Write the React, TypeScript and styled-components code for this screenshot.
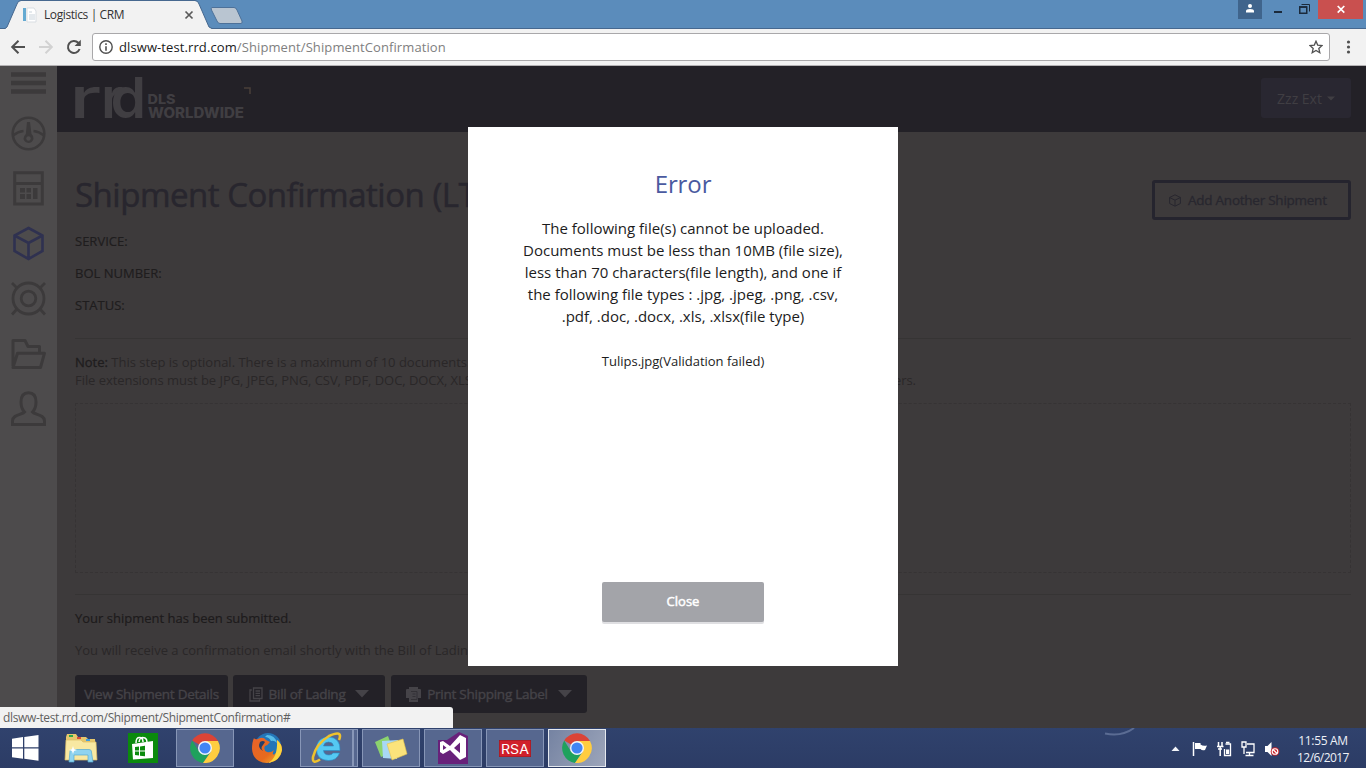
import React from "react";
import styled, { createGlobalStyle } from "styled-components";

const GlobalStyle = createGlobalStyle`
  * { box-sizing: border-box; }
  html, body { margin: 0; padding: 0; overflow: hidden; }
  svg { display: block; flex: none; }
`;

const ui = `"Open Sans", "Noto Sans", sans-serif`;

const Desktop = styled.div`
  position: relative;
  width: 1366px;
  height: 768px;
  display: flex;
  flex-direction: column;
  overflow: hidden;
  font-family: ${ui};
  background: #3d3a3b;
`;

/* ---------- browser chrome ---------- */

const TabStrip = styled.div`
  height: 29px;
  flex: none;
  display: flex;
  align-items: flex-start;
  background: #5b8cbb;
  border-bottom: 1px solid #46688f;
`;

const Tab = styled.div`
  position: relative;
  width: 214px;
  height: 29px;
  display: flex;
  align-items: center;
  padding: 1px 0 0 22px;
`;

const TabShape = styled.svg`
  position: absolute;
  left: 0;
  top: 0;
`;

const NewTab = styled.svg`
  margin-left: -7px;
`;

const TabContent = styled.div`
  position: relative;
  display: flex;
  align-items: center;
  width: 172px;
`;

const TabTitle = styled.span`
  flex: 1;
  margin: -1px 0 0 6px;
  font-size: 12px;
  letter-spacing: -0.4px;
  color: #333;
  white-space: nowrap;
`;

const WindowControls = styled.div`
  margin-left: auto;
  display: flex;
  padding-right: 3px;
`;

const WindowButton = styled.div<{ $width: number; $bg?: string }>`
  width: ${(p) => p.$width}px;
  height: 19px;
  background: ${(p) => p.$bg ?? "transparent"};
  display: flex;
  justify-content: center;
`;

const Toolbar = styled.div`
  height: 37px;
  flex: none;
  display: flex;
  align-items: center;
  padding: 0 0 1px 10px;
  background: #f2f2f2;
  border-bottom: 1px solid #b4b2b4;
`;

const NavIcons = styled.div`
  display: flex;
  flex: none;
  width: 82px;
  gap: 12px;
`;

const AddressBar = styled.div`
  width: 1238px;
  flex: none;
  height: 28px;
  display: flex;
  align-items: center;
  padding: 0 6px;
  border: 1px solid #a9a8aa;
  border-radius: 3px;
  background: #fff;
`;

const Url = styled.div`
  flex: 1;
  margin-left: 6px;
  font-size: 13px;
  letter-spacing: 0.1px;
  color: #808080;
  b { font-weight: 400; color: #1a1a1a; }
`;

const MenuDots = styled.svg`
  margin-left: 11px;
`;

/* ---------- page ---------- */

const Page = styled.div`
  height: 662px;
  flex: none;
  display: flex;
  background: #3d3a3b;
`;

const Sidebar = styled.nav`
  width: 57px;
  background: #4d4b4c;
  padding: 6px 0 0 11px;
  display: flex;
  flex-direction: column;
`;

const SideIcon = styled.svg<{ $gap: number }>`
  margin-bottom: ${(p) => p.$gap}px;
`;

const Body = styled.div`
  flex: 1;
  display: flex;
  flex-direction: column;
`;

const Header = styled.header`
  height: 66px;
  flex: none;
  display: flex;
  justify-content: space-between;
  align-items: flex-start;
  background: #232127;
  padding: 8px 15px 0 11px;
`;

const Logo = styled.svg`
  overflow: visible;
  font-family: Inter, sans-serif;
  fill: #403e42;
`;

const UserButton = styled.div`
  margin-top: 4px;
  width: 90px;
  height: 40px;
  border-radius: 3px;
  background: #292731;
  display: flex;
  align-items: center;
  justify-content: center;
  gap: 5px;
  font-size: 14px;
  color: #403e43;
`;

const Content = styled.main`
  padding: 0 15px 0 18px;
`;

const TitleRow = styled.div`
  margin-top: 48px;
  height: 40px;
  display: flex;
  align-items: center;
  justify-content: space-between;
`;

const Title = styled.h1`
  margin: -12px 0 0;
  font-size: 33px;
  font-weight: 400;
  letter-spacing: -0.48px;
  color: #28262e;
  -webkit-text-stroke: 0.5px #28262e;
  white-space: nowrap;
`;

const AddButton = styled.div`
  width: 199px;
  height: 40px;
  border: 3px solid #25242e;
  border-radius: 3px;
  display: flex;
  align-items: center;
  padding-left: 14px;
  gap: 7px;
  font-size: 13.5px;
  letter-spacing: -0.25px;
  color: #28272f;
  -webkit-text-stroke: 0.3px #28272f;
  white-space: nowrap;
`;

const Fields = styled.div`
  margin-top: 5px;
`;

const Field = styled.div`
  height: 32px;
  line-height: 32px;
  font-size: 13px;
  color: #1f1d1e;
  -webkit-text-stroke: 0.2px #1f1d1e;
`;

const Divider = styled.div<{ $top: number }>`
  margin-top: ${(p) => p.$top}px;
  height: 1px;
  background: #363434;
`;

const Note = styled.div`
  margin-top: 14px;
  height: 36px;
  line-height: 18px;
  font-size: 13px;
  color: #2a2728;
  white-space: nowrap;
  b { font-weight: 400; color: #1f1d1e; -webkit-text-stroke: 0.3px #1f1d1e; }
`;

const NoteLine = styled.div`
  display: flex;
  justify-content: space-between;
  width: 841px;
  letter-spacing: -0.05px;
`;

const DropZone = styled.div`
  margin-top: 14px;
  height: 170px;
  border: 1px dashed #363334;
`;

const Message = styled.p<{ $strong?: boolean }>`
  margin: 0;
  height: 32px;
  line-height: 32px;
  font-size: 13px;
  color: ${(p) => (p.$strong ? "#1d1b1c" : "#2a2728")};
  -webkit-text-stroke: ${(p) => (p.$strong ? "0.2px #1d1b1c" : "0")};
  white-space: nowrap;
`;

const Messages = styled.div`
  margin-top: 7px;
`;

const Actions = styled.div`
  margin-top: 9px;
  display: flex;
`;

const Action = styled.div<{ $width: number; $gap: number }>`
  width: ${(p) => p.$width}px;
  height: 38px;
  margin-right: ${(p) => p.$gap}px;
  border-radius: 3px;
  background: #232127;
  color: #454348;
  font-size: 13.5px;
  letter-spacing: -0.25px;
  -webkit-text-stroke: 0.4px #454348;
  display: flex;
  align-items: center;
  justify-content: center;
  white-space: nowrap;
  gap: 6px;
`;

/* ---------- dialog ---------- */

const Dialog = styled.div`
  position: absolute;
  left: 468px;
  top: 127px;
  width: 430px;
  height: 539px;
  background: #fff;
  display: flex;
  flex-direction: column;
  align-items: center;
  text-align: center;
`;

const DialogTitle = styled.h2`
  margin: 40px 0 0;
  line-height: 34px;
  font-size: 24px;
  font-weight: 400;
  letter-spacing: -0.1px;
  color: #4a5aa0;
`;

const DialogText = styled.p`
  margin: 16px 0 0;
  line-height: 22px;
  font-size: 15px;
  color: #1c1c1c;
  white-space: nowrap;
`;

const DialogFile = styled.p`
  margin: 23px 0 0;
  line-height: 22px;
  font-size: 13px;
  color: #1c1c1c;
`;

const CloseButton = styled.div`
  margin-top: 210px;
  width: 162px;
  height: 40px;
  border-radius: 2px;
  background: #a3a4a9;
  box-shadow: 0 2px 0 #dfdfe2;
  color: #fff;
  font-size: 13px;
  -webkit-text-stroke: 0.5px #fff;
  line-height: 39px;
`;

const StatusBubble = styled.div`
  position: absolute;
  left: 0;
  top: 707px;
  width: 453px;
  height: 21px;
  padding-left: 3px;
  background: #f2f2f2;
  border-top-right-radius: 3px;
  font-size: 12px;
  letter-spacing: -0.36px;
  line-height: 21px;
  color: #5f5f5f;
`;

/* ---------- taskbar ---------- */

const Taskbar = styled.div`
  height: 40px;
  flex: none;
  display: flex;
  background: linear-gradient(#30426d, #2c3c65);
  overflow: hidden;
`;

const TaskItem = styled.div<{ $width: number; $gap?: number; $state?: "open" | "active" }>`
  width: ${(p) => p.$width}px;
  height: 38px;
  margin: 1px ${(p) => p.$gap ?? 4}px 0 0;
  display: flex;
  align-items: center;
  justify-content: center;
  border: ${(p) => (p.$state ? `1px solid ${p.$state === "active" ? "#e4e8ef" : "#8796b7"}` : "none")};
  background: ${(p) =>
    p.$state === "active" ? "linear-gradient(120deg,#7583a2,#9ca5ba)" : p.$state === "open" ? "#56678f" : "transparent"};
`;

const Tray = styled.div`
  margin-left: auto;
  width: 266px;
  display: flex;
`;

const Clock = styled.div`
  flex: none;
  width: 72px;
  padding-top: 4px;
  text-align: center;
  font-size: 12px;
  line-height: 17px;
  letter-spacing: -0.35px;
  color: #eef1f7;
`;

const ClockDate = styled.div`
  letter-spacing: -0.55px;
`;

const ChromeIcon = () => (
  <svg width="30" height="30" viewBox="0 0 30 30">
    <path d="M15 15 L2.2 7.4 A15 15 0 0 1 28 8 L15 8Z" fill="#db4437" />
    <path d="M2.2 7.4 A15 15 0 0 0 13 29.9 L21 18 L15 15 L9 18.5Z" fill="#1fa15d" />
    <path d="M28 8 A15 15 0 0 1 13 29.9 L21 18.5 L15 8Z" fill="#ffcd40" />
    <circle cx="15" cy="15" r="7" fill="#f3f6fa" />
    <circle cx="15" cy="15" r="5.6" fill="#4285f4" />
  </svg>
);

const ExplorerIcon = () => (
  <svg width="34" height="30" viewBox="0 0 34 30">
    <path d="M2 4 L3 1 H12 L14 4 H22 L24 6 H31 L32 26 H2Z" fill="#e6c76d" />
    <rect x="5" y="2" width="4" height="2" fill="#2ba84a" />
    <rect x="13" y="4" width="4" height="2" fill="#d94c3a" />
    <rect x="22" y="6" width="4" height="2" fill="#3f9de0" />
    <path d="M2 7 H17 L19 9 H32 L33 27 H1Z" fill="#f8e8a2" stroke="#dcbb61" strokeWidth=".7" />
    <path d="M5 29 L6 18 Q6 16.500 8 16.500 H25 Q27 16.500 27.300 18 L29 29 H24 V22 H10 V29Z" fill="#8fd3ef" stroke="#56a9d0" strokeWidth=".7" />
    <path d="M9 13 L10 16 L13 17 L10 18 L9 21 L8 18 L5 17 L8 16Z" fill="#fff" />
  </svg>
);

const StoreIcon = () => (
  <svg width="30" height="30" viewBox="0 0 30 30">
    <rect width="30" height="30" fill="#0b8a0d" />
    <path d="M8 10 Q8 4 12 4.500 Q15 5 15 9 M11 9 Q12 3 17 5 Q19 6 19 9" fill="none" stroke="#fff" strokeWidth="1.500" />
    <path d="M4 11 L25 8 V25 L5 26.500Z" fill="#fff" />
    <path d="M7 14 L11 13.500 V17.500 H7Z M12 13.400 L17 12.800 V17.500 H12Z M7 18.500 H11 V22.500 L7 22Z M12 18.500 H17 V23.300 L12 22.700Z" fill="#0b8a0d" />
  </svg>
);

const FirefoxIcon = () => (
  <svg width="32" height="32" viewBox="0 0 32 32">
    <defs>
      <linearGradient id="fox" x1="0" y1="0" x2="1" y2="1">
        <stop offset="0" stopColor="#e8622a" />
        <stop offset=".6" stopColor="#e66a1e" />
        <stop offset="1" stopColor="#f7b82c" />
      </linearGradient>
    </defs>
    <circle cx="17" cy="14" r="13" fill="#2375b8" />
    <path d="M16 3 Q24 3 26 11 Q23 8 20 9 Q18 5 14 5Z" fill="#57bce8" />
    <path d="M3 6 Q4 8 7 7 Q12 4 15 8 L19 10 Q17 13 14 14 Q12 18 16 20 Q20 21 23 18 Q20 24 24 22 Q28 18 26 8 Q31 12 31 18 Q29 30 16 31 Q2 30 1 17 Q1 10 3 6Z" fill="url(#fox)" />
    <path d="M26 8 Q31 12 31 18 Q29 29 17 31 Q27 26 26 8Z" fill="#fbd63e" />
    <path d="M9 10 Q12 8 14 10 L12 13 Q9 16 12 19 Q6 16 9 10Z" fill="#263e68" />
  </svg>
);

const BrowserEIcon = () => (
  <svg width="32" height="34" viewBox="0 0 32 34">
    <path d="M29 19.500 H12.500 Q13 24 18 24 Q21 24 22 22 H28.500 Q26 29.500 17.500 29.500 Q5.500 29 5.500 18 Q5.500 6.500 17.500 6 Q29.500 6.500 29 19.500Z M12.500 15 H22.500 Q22 11 17.500 11 Q13.300 11 12.500 15Z" fill="#55c9f2" fillRule="evenodd" stroke="#238fca" strokeWidth=".6" />
    <path d="M9 28.500 Q1 34 2 26 Q5 13 18 5 Q29 0 29 5 Q29 7 28 9" fill="none" stroke="#efc22d" strokeWidth="2.600" />
  </svg>
);

const StickyIcon = () => (
  <svg width="34" height="26" viewBox="0 0 34 26">
    <path d="M1 7 L14 1 L20 17 L7 22Z" fill="#8bd36e" />
    <path d="M8 6 L24 5 L23 24 L9 23Z" fill="#a8d8f5" />
    <path d="M13 9 L29 4 L33 19 L18 25Z" fill="#fbe37b" stroke="#e4c34a" strokeWidth=".6" />
  </svg>
);

const StudioIcon = () => (
  <svg width="32" height="32" viewBox="0 0 32 32">
    <path d="M1 8 H10 L22 0 L31 4 V32 H1Z" fill="#68217a" />
    <path d="M3 10 L6 9 L13 14 L23 3 L29 6 V25 L23 28 L13 18 L6 22 L3 20Z M6 13 V18 L9.500 15.700Z M17 16 L23 21 V10.500Z" fill="#fff" fillRule="evenodd" />
  </svg>
);

const SIDE = "#3c3a3b";

const App: React.FC = () => (
  <>
    <GlobalStyle />
    <Desktop>
      <TabStrip>
        <Tab>
          <TabShape width="214" height="29" viewBox="0 0 214 29">
            <path d="M5 29 L7 27 L17 4 Q18 1 21 1 H195 Q198 1 199 4 L209 27 L212 29Z" fill="#f2f2f2" />
            <path d="M0 28.500 H5 L7 27 L17 4 Q18 .5 21 .5 H195 Q198 .5 199 4 L209 27 L212 28.500 H214" fill="none" stroke="#46688f" />
          </TabShape>
          <TabContent>
            <svg width="16" height="16" viewBox="0 0 16 16">
              <rect x="1" y="1" width="3" height="13" fill="#64aad2" />
              <path d="M5 1 H12 L14 4 V15 H5Z" fill="#fff" stroke="#d8dde2" />
              <path d="M7 5 H10 M7 8 H13 M7 10 H13 M7 12 H13" stroke="#c9d3db" />
            </svg>
            <TabTitle>Logistics | CRM</TabTitle>
            <svg width="10" height="10" viewBox="0 0 10 10">
              <path d="M1.500 1.500 L8.500 8.500 M8.500 1.500 L1.500 8.500" stroke="#5a5a5a" strokeWidth="1.700" />
            </svg>
          </TabContent>
        </Tab>
        <NewTab width="36" height="28" viewBox="-4 0 36 28">
          <path d="M1 7.500 H23 Q25 7.500 26 10 L31 21 Q31.500 23.500 30 23.500 H9 Q7 23.500 6 21 L.5 10 Q-.5 7.500 1 7.500Z" fill="#b9c5d1" stroke="#4d7199" />
        </NewTab>
        <WindowControls>
          <WindowButton $width={24} $bg="#3f648c">
            <svg width="10" height="14" viewBox="0 0 10 14">
              <circle cx="5" cy="6" r="2" fill="#fff" />
              <path d="M1 12.500 V11 Q1 9 5 9 Q9 9 9 11 V12.500Z" fill="#fff" />
            </svg>
          </WindowButton>
          <WindowButton $width={31}>
            <svg width="8" height="15" viewBox="0 0 8 15"><rect y="11" width="8" height="2" fill="#1b2a3b" /></svg>
          </WindowButton>
          <WindowButton $width={25}>
            <svg width="13" height="15" viewBox="0 0 13 15">
              <path d="M2.500 4.500 H10.500 V11.500" fill="none" stroke="#1b2a3b" />
              <rect x=".75" y="7" width="7" height="6.250" fill="none" stroke="#1b2a3b" strokeWidth="1.500" />
              <path d="M0 7 H8" stroke="#1b2a3b" strokeWidth="1.500" />
            </svg>
          </WindowButton>
          <WindowButton $width={45} $bg="#c9504f">
            <svg width="8" height="14" viewBox="0 0 8 14"><path d="M.7 6 L7.300 12.600 M7.300 6 L.7 12.600" stroke="#fff" strokeWidth="1.700" /></svg>
          </WindowButton>
        </WindowControls>
      </TabStrip>

      <Toolbar>
        <NavIcons>
          <svg width="16" height="16" viewBox="0 0 16 16"><path d="M15 8 H2.500 M8.500 1.700 L2.200 8 L8.500 14.300" fill="none" stroke="#505050" strokeWidth="2" /></svg>
          <svg width="16" height="16" viewBox="0 0 16 16"><path d="M1 8 H13.500 M7.500 1.700 L13.800 8 L7.500 14.300" fill="none" stroke="#d2d2d2" strokeWidth="2" /></svg>
          <svg width="16" height="16" viewBox="0 0 16 16">
            <path d="M13.600 10 A6 6 0 1 1 12.300 3.800 L13.500 5" fill="none" stroke="#505050" strokeWidth="2" />
            <path d="M14.800 .8 V7 H8.600Z" fill="#505050" />
          </svg>
        </NavIcons>
        <AddressBar>
          <svg width="14" height="14" viewBox="0 0 14 14">
            <circle cx="7" cy="7" r="6.200" fill="none" stroke="#505050" strokeWidth="1.400" />
            <path d="M7 6.200 V10.800 M7 3.200 V4.900" stroke="#505050" strokeWidth="1.600" />
          </svg>
          <Url><b>dlsww-test.rrd.com</b>/Shipment/ShipmentConfirmation</Url>
          <svg width="14" height="14" viewBox="0 0 14 14">
            <path d="M7 1.200 L8.700 5.100 L13 5.500 L9.800 8.400 L10.800 12.700 L7 10.400 L3.200 12.700 L4.200 8.400 L1 5.500 L5.300 5.100Z" fill="none" stroke="#505050" strokeWidth="1.300" />
          </svg>
        </AddressBar>
        <MenuDots width="16" height="14" viewBox="0 0 16 14">
          <circle cx="7.500" cy="2" r="1.600" fill="#505050" />
          <circle cx="7.500" cy="7" r="1.600" fill="#505050" />
          <circle cx="7.500" cy="12" r="1.600" fill="#505050" />
        </MenuDots>
      </Toolbar>

      <Page>
        <Sidebar>
          <SideIcon $gap={22} width="35" height="22" viewBox="0 0 35 22">
            <path d="M0 2.500 H35 M0 11 H35 M0 19.500 H35" stroke={SIDE} strokeWidth="4.500" />
          </SideIcon>
          <SideIcon $gap={20} width="35" height="35" viewBox="0 0 35 35" fill="none" stroke={SIDE} strokeWidth="2.600">
            <circle cx="17.500" cy="17.500" r="15.800" />
            <path d="M2 19.500 Q7 15.500 12.500 15 M22.500 15 Q28 15.500 33 19.500" />
            <path d="M16 6 H19 L20.500 18 Q23 20 22.500 23 Q21 27 17.500 27 Q13.500 26.500 12.500 23 Q12.500 20 14.800 18Z" fill={SIDE} stroke="none" />
            <circle cx="17.500" cy="22.500" r="2.200" fill="#4d4b4c" stroke="none" />
          </SideIcon>
          <SideIcon $gap={20} width="35" height="35" viewBox="0 0 35 35">
            <path d="M3.700 1.700 H31.300 V33 H3.700Z M3.700 12.500 H31.300" fill="none" stroke={SIDE} strokeWidth="3" />
            <path d="M9 17 H14 V21.500 H9Z M15.500 17 H20 V21.500 H15.500Z M9 23 H14 V28 H9Z M15.500 23 H20 V28 H15.500Z M22 17 H26.500 V28 H22Z" fill={SIDE} />
          </SideIcon>
          <SideIcon $gap={20} width="35" height="35" viewBox="0 0 35 35">
            <path d="M17.500 2 L31.500 9.500 V25 L17.500 33 L3.500 25 V9.500Z M3.500 9.500 L17.500 17 L31.500 9.500 M17.500 17 V33" fill="none" stroke="#2f3150" strokeWidth="2.600" />
          </SideIcon>
          <SideIcon $gap={20} width="35" height="35" viewBox="0 0 35 35">
            <g fill="none" stroke={SIDE} strokeWidth="2.800">
              <circle cx="17.500" cy="17.500" r="15.500" />
              <circle cx="17.500" cy="17.500" r="7.300" />
              <path d="M1 2 L6 7 M34 2 L29 7 M1 33.500 L6 28 M34 33.500 L29 28" />
            </g>
          </SideIcon>
          <SideIcon $gap={20} width="35" height="35" viewBox="0 0 35 35">
            <path d="M2 30 V4.500 H14 L17 10.500 H28.500 V17 M2 31.500 L6.500 17.200 H33.500 L29.500 31.500Z" fill="none" stroke={SIDE} strokeWidth="3" strokeLinejoin="round" />
          </SideIcon>
          <SideIcon $gap={0} width="35" height="35" viewBox="0 0 35 35">
            <path d="M17.500 1.800 C23.500 1.800 25 6 25 11 C25 15.500 23.500 19 21.500 21 C24 24 33.500 23.500 33.500 30 V33.500 H1.500 V30 C1.500 23.500 11 24 13.500 21 C11.500 19 10 15.500 10 11 C10 6 11.500 1.800 17.500 1.800Z" fill="none" stroke={SIDE} strokeWidth="3" />
          </SideIcon>
        </Sidebar>

        <Body>
          <Header>
            <Logo width="186" height="56" viewBox="68 74 186 56">
              <text transform="translate(75 118) scale(1.45 1)" x="-4" y="0" fontSize="57" fontWeight="500">r</text>
              <text transform="translate(105 118)" x="-4 5.500" y="0" fontSize="57" fontWeight="600">rd</text>
              <text x="147.500" y="103.700" fontSize="13" fontWeight="800" textLength="28" lengthAdjust="spacingAndGlyphs">DLS</text>
              <text x="148" y="118" fontSize="14" fontWeight="800" textLength="96" lengthAdjust="spacingAndGlyphs">WORLDWIDE</text>
              <path d="M244 88 H250 V94" fill="none" stroke="#4a3f3a" strokeWidth="1.500" />
            </Logo>
            <UserButton>
              Zzz Ext
              <svg width="8" height="5" viewBox="0 0 8 5"><path d="M0 .5 H8 L4 4.500Z" fill="#403e43" /></svg>
            </UserButton>
          </Header>

          <Content>
            <TitleRow>
              <Title>Shipment Confirmation (LTL)</Title>
              <AddButton>
                <svg width="12" height="13" viewBox="0 0 12 13">
                  <path d="M6 .8 L11.400 3.500 V9.500 L6 12.200 L.6 9.500 V3.500Z M.6 3.500 L6 6.200 L11.400 3.500 M6 6.200 V12" fill="none" stroke="#28272f" />
                </svg>
                Add Another Shipment
              </AddButton>
            </TitleRow>
            <Fields>
              <Field>SERVICE:</Field>
              <Field>BOL NUMBER:</Field>
              <Field>STATUS:</Field>
            </Fields>
            <Divider $top={17} />
            <Note>
              <div><b>Note:</b> This step is optional. There is a maximum of 10 documents.</div>
              <NoteLine>
                <span>File extensions must be JPG, JPEG, PNG, CSV, PDF, DOC, DOCX, XLS, XLSX.</span>
                <span>File names have a limit of 70 characters.</span>
              </NoteLine>
            </Note>
            <DropZone />
            <Divider $top={21} />
            <Messages>
              <Message $strong>Your shipment has been submitted.</Message>
              <Message>You will receive a confirmation email shortly with the Bill of Lading.</Message>
            </Messages>
            <Actions>
              <Action $width={153} $gap={5}>View Shipment Details</Action>
              <Action $width={152} $gap={6}>
                <svg width="14" height="15" viewBox="0 0 14 15">
                  <path d="M4.500 1 H13 V11.500 H4.500Z M2.800 3 H1 V14 H10.500 V12.500 M6.500 4 H11 M6.500 6.300 H11 M6.500 8.600 H11" fill="none" stroke="#454348" strokeWidth="1.300" />
                </svg>
                Bill of Lading
                <svg width="18" height="8" viewBox="0 0 18 8"><path d="M4 0 H18 L11 7.500Z" fill="#454348" /></svg>
              </Action>
              <Action $width={196} $gap={0}>
                <svg width="15" height="15" viewBox="0 0 15 15">
                  <path d="M3 0 H12 V2 H14 Q15 2 15 3 V11 H12 V15 H3 V11 H0 V3 Q0 2 1 2 H3Z" fill="#454348" />
                  <path d="M5 4.500 H11 V12.500 H5 M6.500 7 H9.500 M6.500 9.500 H9.500" fill="none" stroke="#333136" />
                </svg>
                Print Shipping Label
                <svg width="18" height="8" viewBox="0 0 18 8"><path d="M4 0 H18 L11 7.500Z" fill="#454348" /></svg>
              </Action>
            </Actions>
          </Content>
        </Body>
      </Page>

      <Taskbar>
        <TaskItem $width={50} $gap={10}>
          <svg width="27" height="26" viewBox="0 0 27 26">
            <path d="M0 3.700 L11 2.100 V12.300 H0Z M12.300 1.900 L26.500 0 V12.300 H12.300Z M0 13.500 H11 V23.700 L0 22.200Z M12.300 13.500 H26.500 V25.700 L12.300 23.800Z" fill="#fff" />
          </svg>
        </TaskItem>
        <TaskItem $width={42} $gap={20}><ExplorerIcon /></TaskItem>
        <TaskItem $width={42} $gap={12}><StoreIcon /></TaskItem>
        <TaskItem $width={58} $state="open"><ChromeIcon /></TaskItem>
        <TaskItem $width={58}><FirefoxIcon /></TaskItem>
        <TaskItem $width={53} $gap={0} $state="open"><BrowserEIcon /></TaskItem>
        <TaskItem $width={5} $state="open" />
        <TaskItem $width={58} $state="open"><StickyIcon /></TaskItem>
        <TaskItem $width={58} $state="open"><StudioIcon /></TaskItem>
        <TaskItem $width={58} $state="open">
          <svg width="32" height="17" viewBox="0 0 32 17">
            <rect width="32" height="17" fill="#d0202b" stroke="#8e1a25" />
            <text x="2" y="13.500" fontFamily="Inter, sans-serif" fontSize="13" fontWeight="400" fill="#fff" textLength="28" lengthAdjust="spacingAndGlyphs">RSA</text>
          </svg>
        </TaskItem>
        <TaskItem $width={58} $state="active"><ChromeIcon /></TaskItem>
        <Tray>
          <svg width="187" height="40" viewBox="1100 728 187 40">
            <path d="M1105 733.500 Q1122 737 1134 728" fill="none" stroke="#5b6c93" strokeWidth="2" />
            <path d="M1171.500 751 L1175.500 746.500 L1179.500 751Z" fill="#f2f4f8" />
            <path d="M1193.500 742 V756" stroke="#fff" strokeWidth="1.500" />
            <path d="M1195 743 H1200.500 V744.500 Q1203 746.500 1207 745.500 L1205 750 Q1202 751 1200.500 749 H1195Z" fill="#fff" />
            <path d="M1218.500 742 V746 M1222 742 V746 M1217 746.500 H1223.500 M1218 749 H1222 M1220.200 747 V756" stroke="#fff" strokeWidth="1.500" />
            <path d="M1225.500 744 H1230.500 V755.500 H1224.500 V749" fill="none" stroke="#fff" strokeWidth="1.300" />
            <path d="M1226 742.500 H1229.500" stroke="#fff" strokeWidth="1.500" />
            <rect x="1226" y="749.500" width="3.200" height="4.500" fill="#fff" />
            <path d="M1247 744 H1254 V752.500 H1246 M1249.500 752.500 V755.500 M1245.500 755.500 H1253.500 M1242 742 H1246 V747 H1242Z M1244 747 V754" fill="none" stroke="#fff" strokeWidth="1.300" />
            <path d="M1265 746 H1267.500 L1271.500 742 V756 L1267.500 752 H1265Z" fill="#fff" />
            <circle cx="1275" cy="751.500" r="4.300" fill="#cb242b" />
            <circle cx="1275" cy="751.500" r="2.800" fill="none" stroke="#fff" strokeWidth="1.100" />
            <path d="M1273 749.500 L1277 753.500" stroke="#fff" strokeWidth="1.200" />
          </svg>
          <Clock>11:55 AM<ClockDate>12/6/2017</ClockDate></Clock>
        </Tray>
      </Taskbar>

      <Dialog>
        <DialogTitle>Error</DialogTitle>
        <DialogText>
          The following file(s) cannot be uploaded.<br />
          Documents must be less than 10MB (file size),<br />
          less than 70 characters(file length), and one if<br />
          the following file types : .jpg, .jpeg, .png, .csv,<br />
          .pdf, .doc, .docx, .xls, .xlsx(file type)
        </DialogText>
        <DialogFile>Tulips.jpg(Validation failed)</DialogFile>
        <CloseButton>Close</CloseButton>
      </Dialog>
      <StatusBubble>dlsww-test.rrd.com/Shipment/ShipmentConfirmation#</StatusBubble>
    </Desktop>
  </>
);

export default App;
